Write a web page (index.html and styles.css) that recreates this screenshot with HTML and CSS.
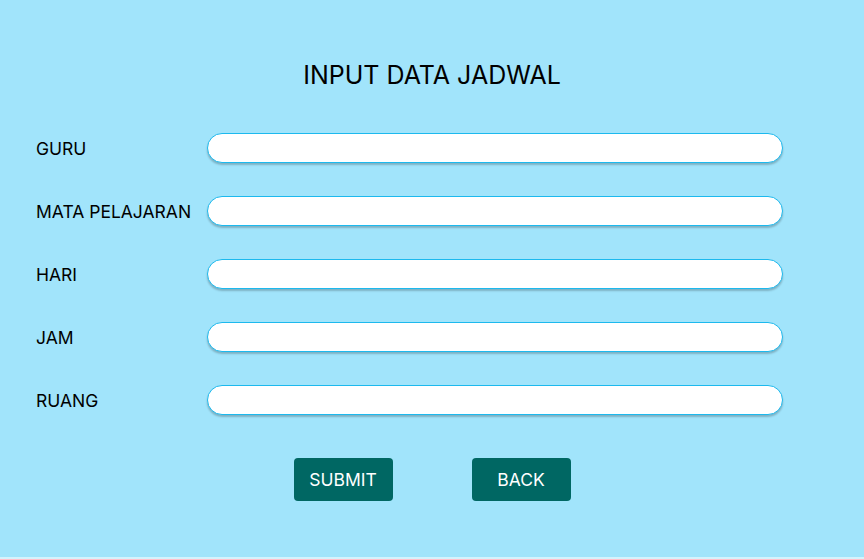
FILE: index.html
```
<!DOCTYPE html>
<html>
<head>
<meta charset="utf-8">
<link rel="stylesheet" href="styles.css">
</head>
<body>
<main class="page">
  <h1 class="title">INPUT DATA JADWAL</h1>
  <form class="form">
    <div class="row"><label class="label">GURU</label><input class="field" type="text"></div>
    <div class="row"><label class="label">MATA PELAJARAN</label><input class="field" type="text"></div>
    <div class="row"><label class="label">HARI</label><input class="field" type="text"></div>
    <div class="row"><label class="label">JAM</label><input class="field" type="text"></div>
    <div class="row"><label class="label">RUANG</label><input class="field" type="text"></div>
    <div class="actions">
      <button class="btn" type="button">SUBMIT</button>
      <button class="btn" type="button">BACK</button>
    </div>
  </form>
</main>
</body>
</html>
```
FILE: styles.css
```
html, body {
  margin: 0;
  padding: 0;
}
body {
  background: #d4f3fd;
  font-family: Inter, "Liberation Sans", sans-serif;
  color: #000;
}
.page {
  height: 557px;
  background: #a1e4fb;
  box-sizing: border-box;
  padding-top: 61px;
}
.title {
  margin: 0;
  text-align: center;
  font-size: 25px;
  font-weight: 400;
  line-height: 28px;
}
.form {
  margin-top: 44px;
  padding-left: 36px;
  display: flex;
  flex-direction: column;
  gap: 33px;
}
.row {
  display: flex;
  align-items: center;
  height: 30px;
}
.label {
  width: 171px;
  font-size: 17.5px;
  line-height: 20px;
  padding-top: 1px;
}
.field {
  width: 576px;
  height: 30px;
  box-sizing: border-box;
  border: 1px solid #1cb9ee;
  border-radius: 15px;
  background: #fff;
  box-shadow: 0 2px 2px rgba(0,0,0,0.22);
  outline: none;
  padding: 0 12px;
  font-family: inherit;
}
.actions {
  display: flex;
  justify-content: center;
  gap: 79px;
  margin-top: 10px;
  margin-left: -36px;
}
.btn {
  width: 99px;
  height: 43px;
  border: none;
  border-radius: 4px;
  background: #006763;
  color: #fff;
  font-family: inherit;
  font-size: 17.5px;
  cursor: pointer;
}
```
